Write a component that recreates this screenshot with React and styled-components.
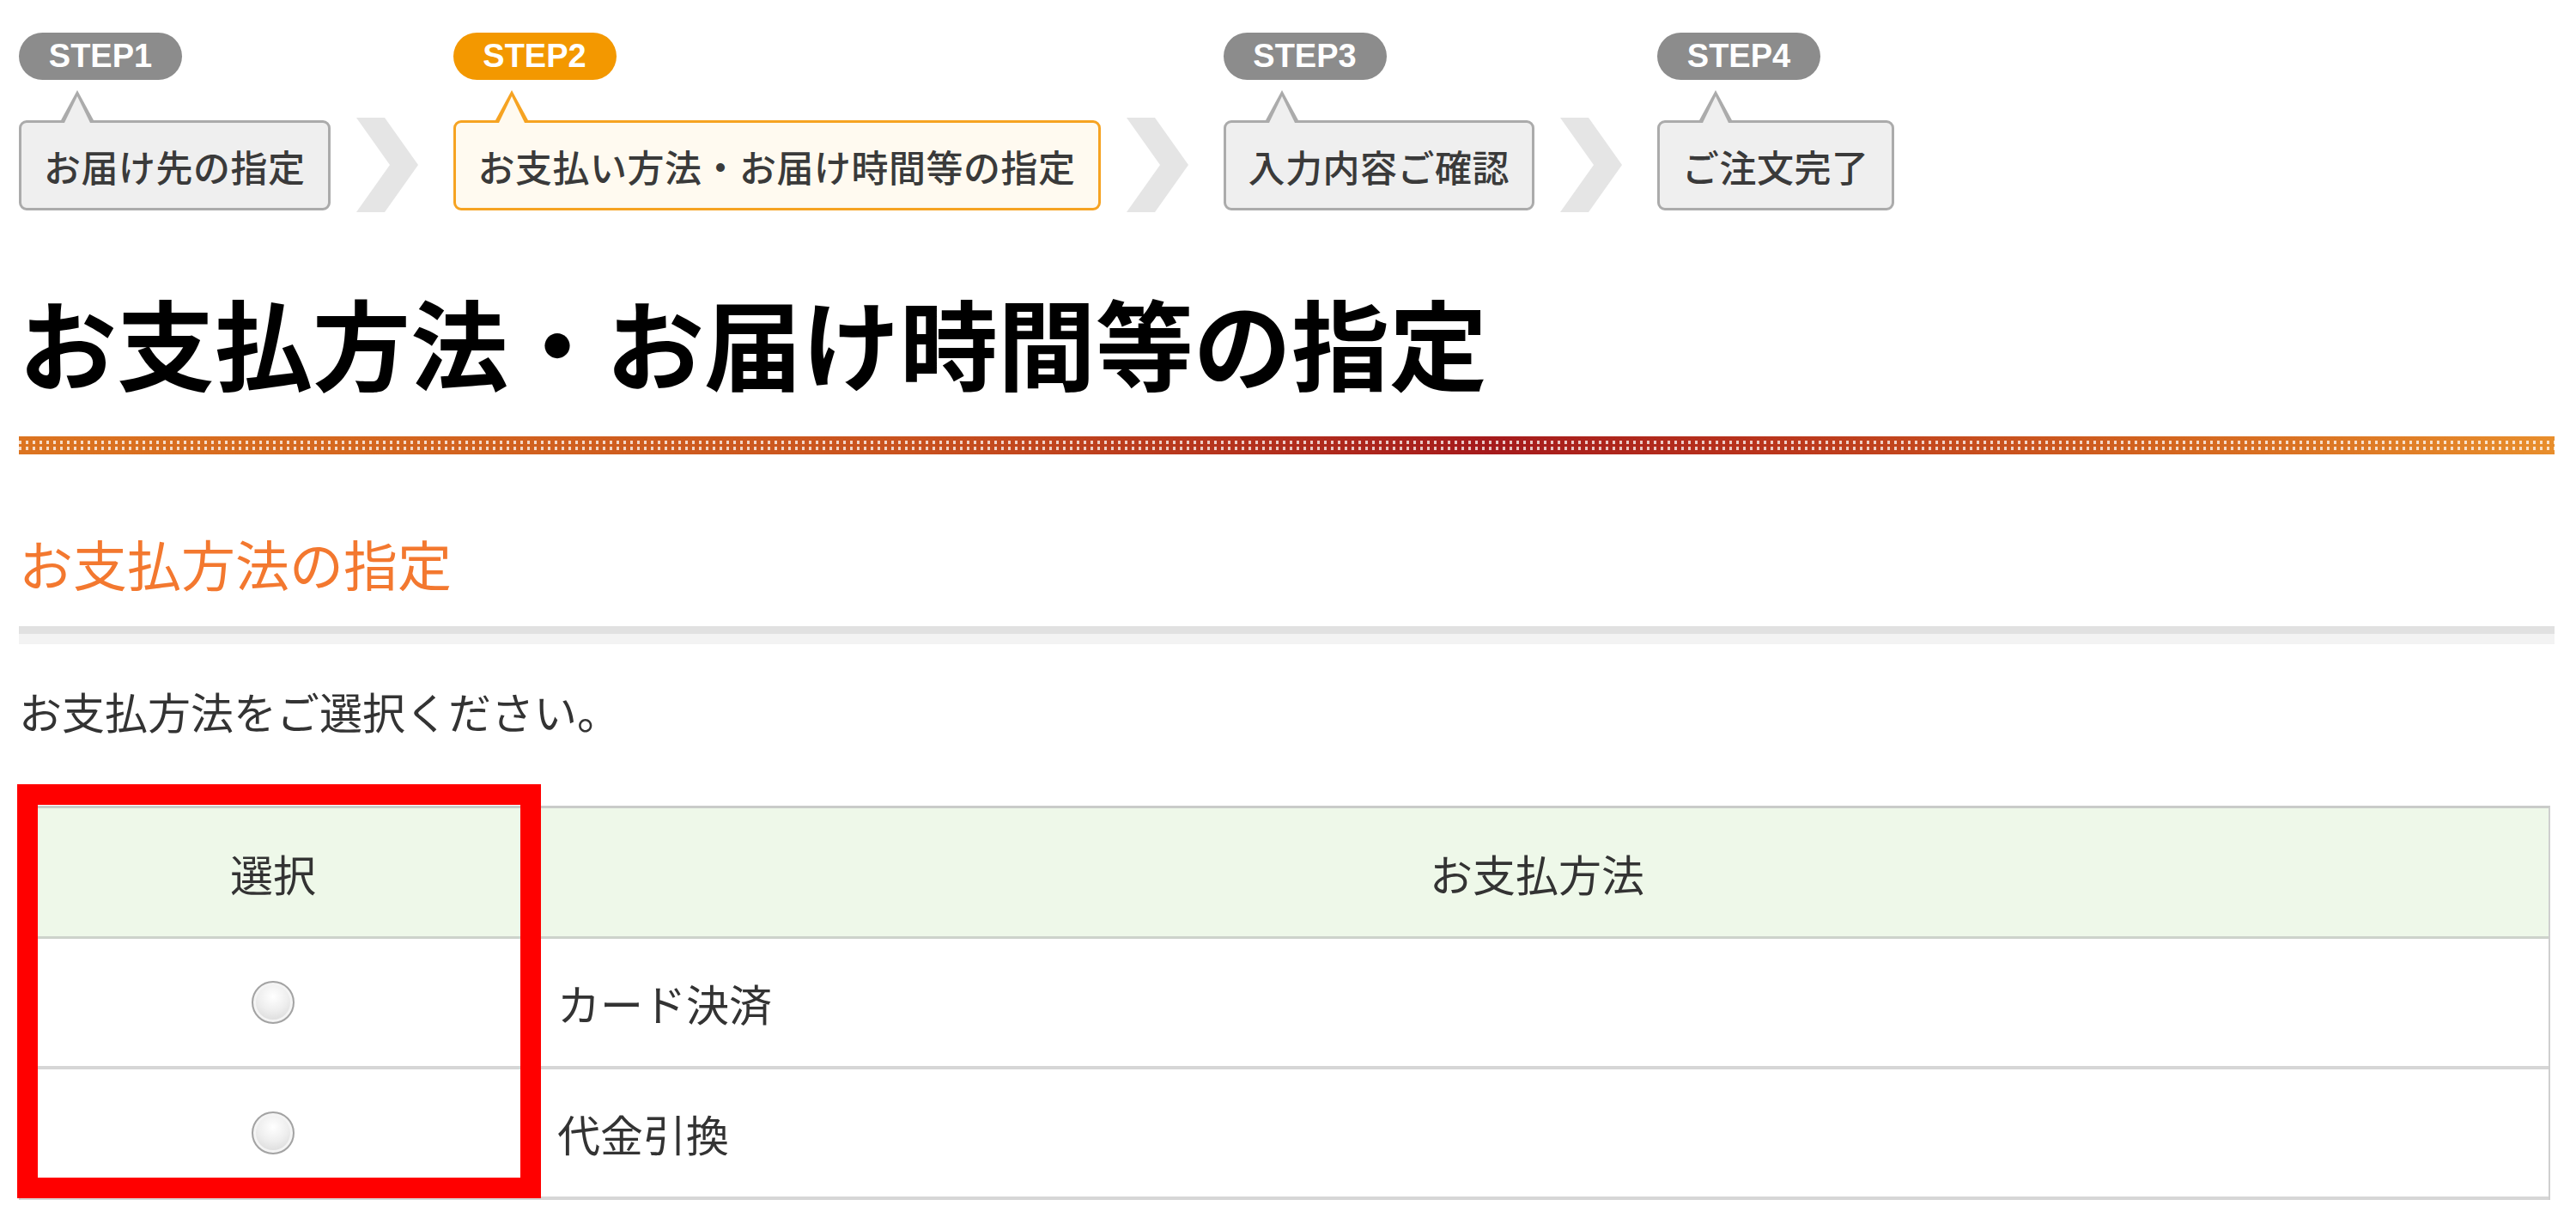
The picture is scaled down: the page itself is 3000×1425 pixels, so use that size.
import styled, { createGlobalStyle, css } from "styled-components";

const GlobalStyle = createGlobalStyle`
  html, body {
    margin: 0;
    padding: 0;
    background: #fff;
  }
  body {
    font-family: "Noto Sans CJK JP", "Noto Sans", sans-serif;
    color: #333;
  }
`;

const steps = [
  { no: "STEP1", label: "お届け先の指定" },
  { no: "STEP2", label: "お支払い方法・お届け時間等の指定", active: true },
  { no: "STEP3", label: "入力内容ご確認" },
  { no: "STEP4", label: "ご注文完了" },
];

const methods = ["カード決済", "代金引換"];

const Chevron = () => (
  <ChevronSvg viewBox="0 0 72 110" width="72" height="110">
    <polygon points="0,0 33,0 72,55 33,110 0,110 39,55" fill="#e5e5e5" />
  </ChevronSvg>
);

const App = () => {
  return (
    <>
      <GlobalStyle />
      <Page>
        <StepBar>
          {steps.map((s, i) => (
            <StepGroup key={s.no}>
              {i > 0 && <Chevron />}
              <Step>
                <StepPill $active={s.active}>{s.no}</StepPill>
                <StepBox $active={s.active}>{s.label}</StepBox>
              </Step>
            </StepGroup>
          ))}
        </StepBar>

        <PageTitle>お支払方法・お届け時間等の指定</PageTitle>
        <TitleRule />

        <SectionTitle>お支払方法の指定</SectionTitle>
        <SectionRule />

        <Lead>お支払方法をご選択ください。</Lead>

        <TableWrap>
          <Table>
            <HeadCell>選択</HeadCell>
            <HeadCell>お支払方法</HeadCell>
            {methods.map((m) => (
              <Row key={m}>
                <Cell $center>
                  <RadioMark />
                </Cell>
                <Cell>{m}</Cell>
              </Row>
            ))}
          </Table>
          <Highlight />
        </TableWrap>
      </Page>
    </>
  );
};

export default App;

const Page = styled.div`
  width: 2953px;
  padding: 38px 0 0 22px;
`;

const StepBar = styled.div`
  display: flex;
  align-items: flex-end;
`;

const StepGroup = styled.div`
  display: flex;
  align-items: flex-end;
`;

const ChevronSvg = styled.svg`
  display: block;
  margin: 0 41px -2px 30px;
`;

const Step = styled.div`
  display: flex;
  flex-direction: column;
  align-items: flex-start;
`;

const StepPill = styled.div`
  width: 190px;
  height: 55px;
  border-radius: 28px;
  background: ${(p) => (p.$active ? "#f39800" : "#8c8c8c")};
  color: #fff;
  font-family: "Liberation Sans", Arial, sans-serif;
  font-weight: 700;
  font-size: 38px;
  display: flex;
  align-items: center;
  justify-content: center;
`;

const StepBox = styled.div`
  position: relative;
  margin-top: 47px;
  height: 105px;
  box-sizing: border-box;
  padding: 0 26px;
  display: flex;
  align-items: center;
  border-radius: 9px;
  font-size: 43px;
  font-weight: 500;
  letter-spacing: 0.5px;
  white-space: nowrap;
  color: #3a3a3a;
  ${(p) =>
    p.$active
      ? css`
          border: 3px solid #f6a322;
          background: #fffaf0;
          --tail: #f6a322;
          --fill: #fffaf0;
        `
      : css`
          border: 3px solid #ababab;
          background: #efefef;
          --tail: #ababab;
          --fill: #efefef;
        `}

  &::before,
  &::after {
    content: "";
    position: absolute;
    width: 0;
    height: 0;
    border-style: solid;
    border-color: transparent;
  }
  &::before {
    top: -38px;
    left: 46px;
    border-width: 0 19px 35px 19px;
    border-bottom-color: var(--tail);
  }
  &::after {
    top: -31px;
    left: 50px;
    border-width: 0 15px 31px 15px;
    border-bottom-color: var(--fill);
  }
`;

const PageTitle = styled.h1`
  margin: 95px 0 0;
  font-size: 114px;
  line-height: 1;
  font-weight: 700;
  color: #000;
  white-space: nowrap;
`;

const TitleRule = styled.div`
  margin-top: 54px;
  height: 21px;
  background:
    linear-gradient(90deg, rgba(255, 255, 255, 0.75) 3px, transparent 3px) 0 5px / 8px 4px repeat-x,
    linear-gradient(90deg, rgba(255, 255, 255, 0.75) 3px, transparent 3px) 0 12px / 8px 4px repeat-x,
    linear-gradient(
      90deg,
      #dc7420 0%,
      #c9521e 35%,
      #a51a1c 58%,
      #b8321c 68%,
      #d4661f 85%,
      #e88e2c 100%
    );
`;

const SectionTitle = styled.h2`
  margin: 94px 0 0;
  font-size: 63px;
  line-height: 1;
  font-weight: 400;
  color: #f3782f;
`;

const SectionRule = styled.div`
  margin-top: 43px;
  height: 21px;
  background: linear-gradient(#e1e1e1 0 9px, #f3f3f3 9px 100%);
`;

const Lead = styled.p`
  margin: 52px 0 0;
  font-size: 50px;
  line-height: 1;
  color: #333;
`;

const TableWrap = styled.div`
  position: relative;
  margin-top: 86px;
  width: 2948px;
`;

const Table = styled.div`
  display: grid;
  grid-template-columns: 588px 1fr;
  border-top: 3px solid #c9cbc9;
  border-right: 2px solid #cfcfcf;
  border-left: 2px solid #cfcfcf;
`;

const Row = styled.div`
  display: contents;
`;

const HeadCell = styled.div`
  height: 152px;
  box-sizing: border-box;
  background: #eef8e9;
  border-bottom: 3px solid #cdd3cb;
  display: flex;
  align-items: center;
  justify-content: center;
  font-size: 50px;
  color: #333;
`;

const Cell = styled.div`
  height: 152px;
  box-sizing: border-box;
  padding-left: ${(p) => (p.$center ? "0" : "37px")};
  border-bottom: 4px solid #d6d6d6;
  background: #fff;
  display: flex;
  align-items: center;
  justify-content: ${(p) => (p.$center ? "center" : "flex-start")};
  font-size: 50px;
  color: #333;
`;

const RadioMark = styled.span`
  display: block;
  width: 46px;
  height: 46px;
  border-radius: 50%;
  border: 2px solid #a3a3a3;
  background: radial-gradient(circle at 50% 35%, #ffffff 0%, #eeeeee 45%, #cfcfcf 100%);
  box-shadow: inset 0 0 0 3px #f4f4f4;
`;

const Highlight = styled.div`
  position: absolute;
  top: -25px;
  left: -2px;
  width: 610px;
  height: 482px;
  box-sizing: border-box;
  border: 24px solid #ff0000;
  pointer-events: none;
`;
